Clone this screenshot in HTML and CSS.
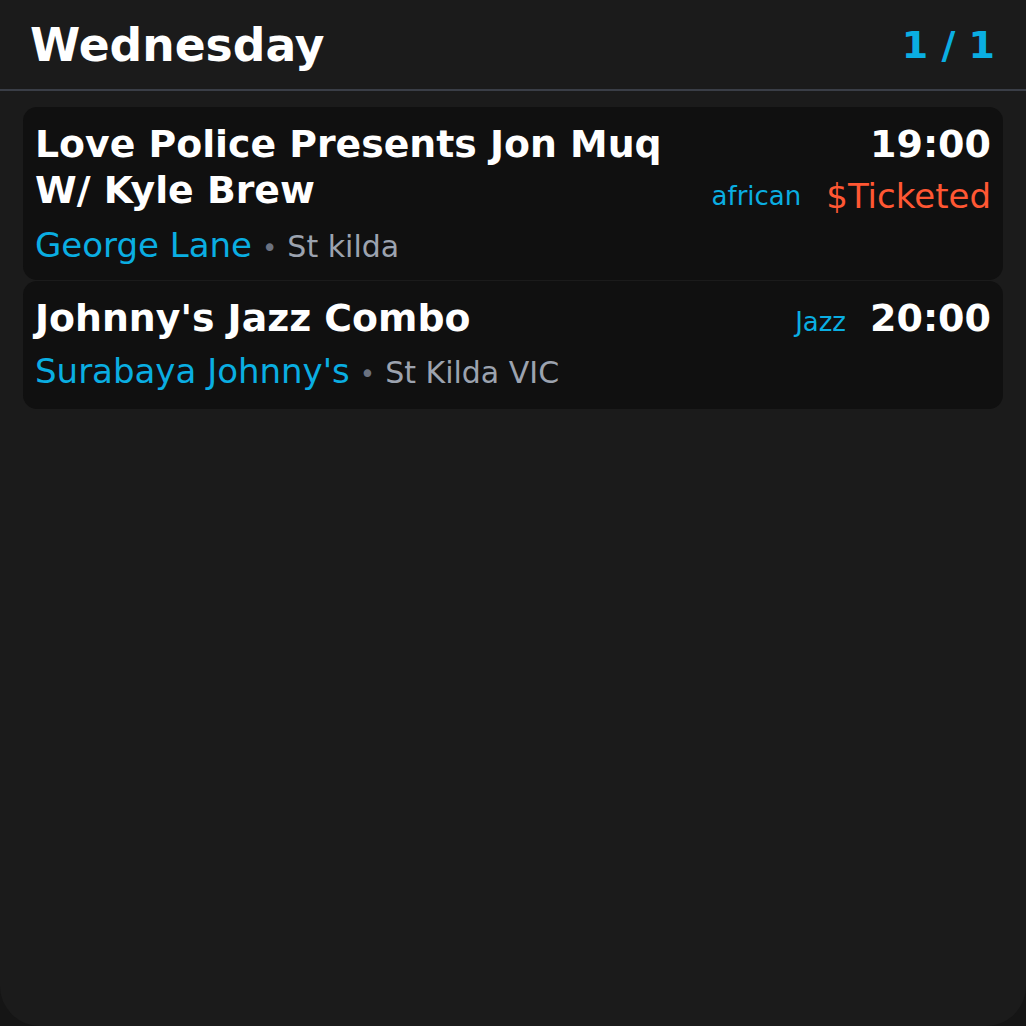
FILE: index.html
```html
<!DOCTYPE html>
<html>
<head>
<meta charset="utf-8">
<link rel="stylesheet" href="styles.css">
</head>
<body>
<div class="widget">
  <header class="head">
    <h1 class="day">Wednesday</h1>
    <div class="page">1 / 1</div>
  </header>
  <div class="list">
    <div class="card">
      <div class="top">
        <div class="title">Love Police Presents Jon Muq W/ Kyle Brew</div>
        <div class="side">
          <div class="time">19:00</div>
          <div class="meta">
            <span class="genre">african</span>
            <span class="price">$Ticketed</span>
          </div>
        </div>
      </div>
      <div class="venue"><span class="vname">George Lane</span><span class="dot">•</span><span class="loc">St kilda</span></div>
    </div>
    <div class="card">
      <div class="top">
        <div class="title">Johnny's Jazz Combo</div>
        <div class="side">
          <div class="meta inline">
            <span class="genre">Jazz</span>
            <span class="time">20:00</span>
          </div>
        </div>
      </div>
      <div class="venue"><span class="vname">Surabaya Johnny's</span><span class="dot">•</span><span class="loc">St Kilda VIC</span></div>
    </div>
  </div>
</div>
</body>
</html>
```
FILE: styles.css
```css
* { box-sizing: border-box; }
html, body {
  margin: 0;
  padding: 0;
  background: #151515;
  font-family: "DejaVu Sans", sans-serif;
}
.widget {
  width: 1026px;
  height: 1026px;
  background: #1b1b1b;
  border-radius: 0 0 40px 40px;
  overflow: hidden;
}
.head {
  display: flex;
  justify-content: space-between;
  align-items: center;
  height: 91px;
  padding: 4px 31px 0 30px;
  border-bottom: 2px solid #3a3e47;
}
.day {
  margin: 0;
  font-size: 45.6px;
  font-weight: 700;
  color: #ffffff;
  line-height: 1;
  padding-bottom: 2px;
}
.page {
  font-size: 38px;
  font-weight: 700;
  color: #0aaee2;
  line-height: 1;
  padding-bottom: 4px;
}
.list {
  padding: 16px 23px 0 23px;
  display: flex;
  flex-direction: column;
  gap: 1px;
}
.card {
  background: #101010;
  border-radius: 14px;
  padding: 14px 12px 12px 12px;
}
.card + .card {
  padding-bottom: 15px;
}
.top {
  display: flex;
  justify-content: space-between;
  align-items: flex-start;
  gap: 20px;
}
.title {
  font-size: 37.8px;
  font-weight: 700;
  color: #ffffff;
  line-height: 46px;
  max-width: 660px;
}
.side {
  display: flex;
  flex-direction: column;
  align-items: flex-end;
}
.time {
  font-size: 38px;
  font-weight: 700;
  color: #ffffff;
  line-height: 46px;
}
.meta {
  display: flex;
  align-items: center;
  gap: 25px;
  height: 46px;
  margin-top: 6px;
}
.meta.inline {
  align-items: baseline;
  margin-top: 0;
  gap: 24px;
}
.genre {
  font-size: 26px;
  color: #0aaee2;
}
.price {
  font-size: 34px;
  color: #ff5733;
}
.venue {
  margin-top: 6px;
  line-height: 40px;
  font-size: 34px;
  color: #0aaee2;
}
.card + .card .venue {
  margin-top: 10px;
}
.dot {
  color: #6b7280;
  font-size: 26px;
  margin: 0 10px;
}
.loc {
  color: #9ca3af;
  font-size: 30px;
}
```
